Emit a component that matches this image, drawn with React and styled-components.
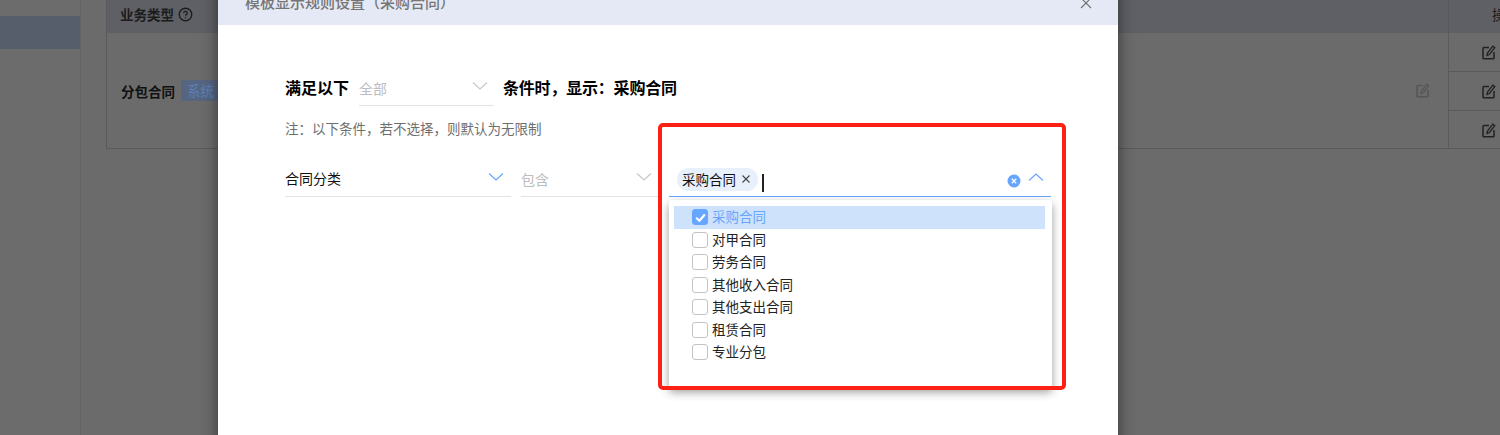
import React from 'react';
import styled, { createGlobalStyle } from 'styled-components';
import { CircleHelp } from 'lucide-react';

const contractTypes = ['采购合同', '对甲合同', '劳务合同', '其他收入合同', '其他支出合同', '租赁合同', '专业分包'];

function Chevron({ up, color }) {
  return (
    <ChevronIcon viewBox="0 0 16 10" $up={up}>
      <path d="M1 1.5 L8 8 L15 1.5" fill="none" stroke={color} strokeWidth="1.2" />
    </ChevronIcon>
  );
}

function EditIcon() {
  return (
    <svg width="14" height="15" viewBox="0 0 14 15" fill="none" stroke="currentColor">
      <path d="M7 2.5 H1.8 Q1 2.5 1 3.3 V13 Q1 13.8 1.8 13.8 H11.2 Q12 13.8 12 13 V7" strokeWidth="1.5" />
      <path d="M5 10.5 L5.5 8 L10.8 1.2 L12.8 2.7 L7.5 9.5 Z" strokeWidth="1.3" />
    </svg>
  );
}

function App() {
  return (
    <Page>
      <GlobalStyle />
      <Sidebar>
        <SideItem />
      </Sidebar>
      <Main>
        <Table>
          <TableBody>
            <HeadRow>
              <HeadLabel>
                业务类型
                <CircleHelp size={15} strokeWidth={2.2} />
              </HeadLabel>
            </HeadRow>
            <BodyRow>
              <CellName>分包合同</CellName>
              <SystemTag>系统</SystemTag>
              <DimEdit>
                <EditIcon />
              </DimEdit>
            </BodyRow>
          </TableBody>
          <ActionColumn>
            <ActionHead>操作</ActionHead>
            <ActionCell>
              <EditIcon />
            </ActionCell>
            <ActionCell>
              <EditIcon />
            </ActionCell>
            <ActionCell>
              <EditIcon />
            </ActionCell>
          </ActionColumn>
        </Table>
      </Main>

      <Modal>
        <ModalHeader>
          <ModalTitle>模板显示规则设置（采购合同）</ModalTitle>
          <CloseIcon viewBox="0 0 12 12">
            <path d="M1 1 L11 11 M11 1 L1 11" stroke="#6f6f6f" strokeWidth="1.1" fill="none" />
          </CloseIcon>
        </ModalHeader>
        <ModalBody>
          <RuleRow>
            <RuleText>满足以下</RuleText>
            <MatchSelect>
              <Placeholder>全部</Placeholder>
              <Chevron color="#c8c8c8" />
            </MatchSelect>
            <RuleSuffix>条件时，显示：采购合同</RuleSuffix>
          </RuleRow>
          <Note>注：以下条件，若不选择，则默认为无限制</Note>
          <ConditionRow>
            <FieldSelect>
              <FieldValue>合同分类</FieldValue>
              <Chevron color="#66a6ff" />
            </FieldSelect>
            <OperatorSelect>
              <Placeholder>包含</Placeholder>
              <Chevron color="#c8c8c8" />
            </OperatorSelect>
            <ValueSelect>
              <Tag>
                采购合同
                <TagClose viewBox="0 0 10 10">
                  <path d="M1.5 1.5 L8.5 8.5 M8.5 1.5 L1.5 8.5" stroke="#444" strokeWidth="1.1" fill="none" />
                </TagClose>
              </Tag>
              <Caret />
              <ClearIcon viewBox="0 0 14 14">
                <circle cx="7" cy="7" r="6.5" fill="#66a6ff" />
                <path d="M4.8 4.8 L9.2 9.2 M9.2 4.8 L4.8 9.2" stroke="#fff" strokeWidth="1.3" fill="none" />
              </ClearIcon>
              <Chevron up color="#66a6ff" />
              <Dropdown>
                {contractTypes.map((name, i) => (
                  <Option key={name} $checked={i === 0}>
                    <CheckBox $checked={i === 0}>
                      {i === 0 && (
                        <svg width="13" height="13" viewBox="0 0 12 12">
                          <path d="M2 6.2 L5 9 L10 3.2" stroke="#fff" strokeWidth="2" fill="none" />
                        </svg>
                      )}
                    </CheckBox>
                    <OptionLabel>{name}</OptionLabel>
                  </Option>
                ))}
              </Dropdown>
            </ValueSelect>
          </ConditionRow>
        </ModalBody>
      </Modal>

      <Highlight />
    </Page>
  );
}

export default App;

const GlobalStyle = createGlobalStyle`
  html, body {
    margin: 0;
    padding: 0;
    background: #6b6b6b;
  }
  body {
    font-family: "Noto Sans CJK SC", "Liberation Sans", sans-serif;
    overflow: hidden;
  }
`;

const Page = styled.div`
  position: relative;
  display: flex;
  width: 1500px;
  height: 435px;
  overflow: hidden;
  background: #6b6b6b;
`;

const Sidebar = styled.div`
  flex: none;
  width: 80px;
  padding-top: 16px;
  border-right: 1px solid #646569;
  background: #6c6c6c;
`;

const SideItem = styled.div`
  height: 33px;
  background: #555e6a;
`;

const Main = styled.div`
  flex: 1;
  padding-left: 25px;
`;

const Table = styled.div`
  display: flex;
  width: 1394px;
  height: 148px;
  border-left: 1px solid #5a5a5a;
  border-bottom: 1px solid #5a5a5a;
`;

const TableBody = styled.div`
  flex: 1;
`;

const HeadRow = styled.div`
  display: flex;
  align-items: center;
  height: 33px;
  padding-left: 13px;
  background: #5f6065;
`;

const HeadLabel = styled.div`
  display: flex;
  align-items: center;
  gap: 4px;
  margin-top: -5px;
  font-size: 13.5px;
  font-weight: 700;
  color: #1c1c1c;
`;

const BodyRow = styled.div`
  display: flex;
  align-items: center;
  height: 115px;
  padding-left: 14px;
`;

const CellName = styled.div`
  font-size: 13.5px;
  font-weight: 700;
  color: #111;
`;

const SystemTag = styled.div`
  margin-left: 6px;
  padding: 0 6px;
  height: 21px;
  line-height: 21px;
  font-size: 13.5px;
  background: #566680;
  color: #5b7fb8;
`;

const DimEdit = styled.div`
  margin-left: auto;
  margin-right: 18px;
  display: flex;
  color: #565656;
`;

const ActionColumn = styled.div`
  flex: none;
  width: 52px;
  border-left: 1px solid #5a5a5a;
`;

const ActionHead = styled.div`
  height: 33px;
  line-height: 28px;
  padding-left: 43px;
  font-size: 13.5px;
  white-space: nowrap;
  color: #1c1c1c;
  background: #5f6065;
`;

const ActionCell = styled.div`
  display: flex;
  align-items: center;
  justify-content: flex-end;
  height: 38px;
  padding-right: 5px;
  color: #222;
  border-bottom: 1px solid #5a5a5a;

  &:last-child {
    border-bottom: 0;
  }
`;

const Modal = styled.div`
  position: absolute;
  top: -19px;
  left: 218px;
  width: 900px;
  height: 470px;
  background: #fff;
  border-radius: 4px;
  box-shadow: 0 0 16px rgba(0, 0, 0, 0.5);
`;

const ModalHeader = styled.div`
  display: flex;
  align-items: center;
  justify-content: space-between;
  height: 44px;
  padding: 0 26px 0 27px;
  background: #e5e9f5;
  border-radius: 4px 4px 0 0;
`;

const ModalTitle = styled.div`
  margin-top: -4px;
  font-size: 15px;
  font-weight: 500;
  color: #757575;
`;

const CloseIcon = styled.svg`
  width: 12px;
  height: 12px;
`;

const ModalBody = styled.div`
  padding: 46px 0 0 67px;
`;

const RuleRow = styled.div`
  display: flex;
  align-items: center;
  gap: 10px;
  height: 35px;
`;

const RuleText = styled.div`
  margin-top: -4px;
  font-size: 16px;
  font-weight: 700;
  color: #000;
`;

const RuleSuffix = styled(RuleText)`
  margin-left: -1px;
  letter-spacing: -0.2px;
`;

const SelectBase = styled.div`
  position: relative;
  display: flex;
  align-items: center;
  box-sizing: border-box;
  height: 35px;
  border-bottom: 1px solid #e3e3e3;
`;

const MatchSelect = styled(SelectBase)`
  justify-content: space-between;
  width: 135px;
  padding-right: 6px;
`;

const Placeholder = styled.span`
  font-size: 14px;
  color: #bdbdbd;
`;

const Note = styled.div`
  margin-top: 12px;
  height: 20px;
  line-height: 20px;
  font-size: 13.5px;
  color: #6e6e6e;
`;

const ConditionRow = styled.div`
  display: flex;
  margin-top: 24px;
`;

const FieldSelect = styled(SelectBase)`
  justify-content: space-between;
  width: 226px;
  padding-right: 7px;
`;

const FieldValue = styled.span`
  margin-top: -2px;
  font-size: 14px;
  color: #111;
`;

const OperatorSelect = styled(SelectBase)`
  justify-content: space-between;
  width: 137px;
  margin-left: 10px;
  padding-right: 6px;
`;

const ValueSelect = styled(SelectBase)`
  width: 382px;
  margin-left: 11px;
  padding: 0 7px 0 8px;
  border-bottom-color: #66a6ff;
`;

const ChevronIcon = styled.svg`
  flex: none;
  width: 16px;
  height: 10px;
  margin-top: -5px;
  transform: ${(p) => (p.$up ? 'rotate(180deg)' : 'none')};
`;

const Tag = styled.div`
  display: flex;
  align-items: center;
  gap: 5px;
  height: 23px;
  margin-top: 1px;
  padding: 0 7px 1px 5px;
  box-sizing: border-box;
  border-radius: 12px;
  background: #e8f0fc;
  font-size: 13.5px;
  color: #111;
`;

const TagClose = styled.svg`
  width: 10px;
  height: 10px;
`;

const Caret = styled.div`
  width: 2px;
  height: 18px;
  margin: 8px 0 0 4px;
  background: #222;
`;

const ClearIcon = styled.svg`
  width: 14px;
  height: 14px;
  margin: 4px 7px 0 auto;
`;

const Dropdown = styled.div`
  position: absolute;
  top: 38px;
  left: 0;
  box-sizing: border-box;
  width: 383px;
  height: 188px;
  padding: 6px 7px 0 5px;
  background: #fff;
  border-radius: 3px;
  box-shadow: 0 4px 10px rgba(0, 0, 0, 0.4);
  z-index: 2;
`;

const Option = styled.div`
  display: flex;
  align-items: center;
  gap: 4px;
  height: 22.5px;
  padding-left: 18px;
  font-size: 13.5px;
  color: ${(p) => (p.$checked ? '#66a6ff' : '#222')};
  background: ${(p) => (p.$checked ? '#cfe2fb' : 'transparent')};
`;

const OptionLabel = styled.span`
  margin-top: -2px;
`;

const CheckBox = styled.span`
  display: flex;
  align-items: center;
  justify-content: center;
  box-sizing: border-box;
  width: 16px;
  height: 16px;
  border-radius: 3px;
  border: 1px solid ${(p) => (p.$checked ? '#66a6ff' : '#c4c4c4')};
  background: ${(p) => (p.$checked ? '#66a6ff' : '#fff')};
`;

const Highlight = styled.div`
  position: absolute;
  top: 123px;
  left: 658px;
  box-sizing: border-box;
  width: 408px;
  height: 267px;
  border: 4px solid #ff2015;
  border-radius: 5px;
  pointer-events: none;
  z-index: 3;
`;
